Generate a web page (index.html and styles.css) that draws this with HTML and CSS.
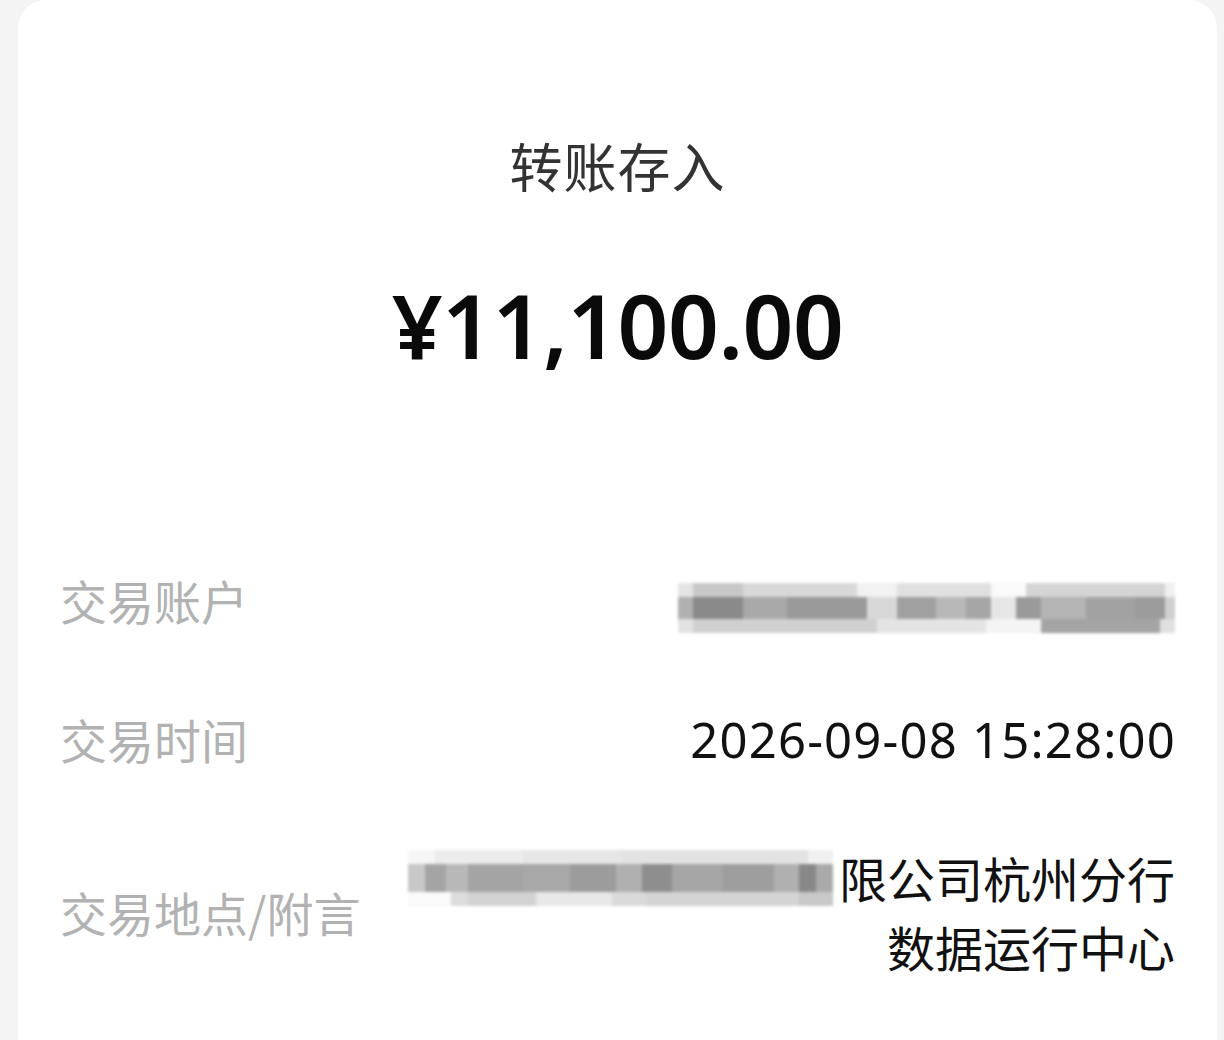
FILE: index.html
```html
<!DOCTYPE html>
<html lang="zh-CN">
<head>
<meta charset="utf-8">
<title>转账存入</title>
<link rel="stylesheet" href="styles.css">
</head>
<body>
<main class="card">
  <h1 class="title">转账存入</h1>
  <div class="amount">¥11,100.00</div>
  <dl class="details">
    <div class="row">
      <dt class="label">交易账户</dt>
      <dd class="value"><span class="mosaic mosaic-account" aria-label="已打码账户"></span></dd>
    </div>
    <div class="row">
      <dt class="label">交易时间</dt>
      <dd class="value value-time">2026-09-08 15:28:00</dd>
    </div>
    <div class="row">
      <dt class="label">交易地点/附言</dt>
      <dd class="value value-multi">
        <span class="line"><span class="mosaic mosaic-place" aria-label="已打码"></span>限公司杭州分行</span>
        <span class="line">数据运行中心</span>
      </dd>
    </div>
  </dl>
</main>
</body>
</html>
```

FILE: styles.css
```css
html, body {
  margin: 0;
  padding: 0;
  background: #f4f4f4;
}

body {
  font-family: "Noto Sans", "Noto Sans CJK SC", sans-serif;
  color: #111;
  height: 1040px;
  overflow: hidden;
}

.card {
  background: #fff;
  margin: 0 7px 0 18px;
  min-height: 1040px;
  border-radius: 28px 28px 0 0;
  padding: 135px 42px 0 42px;
  box-sizing: border-box;
}

.title {
  margin: 0;
  text-align: center;
  font-family: "Noto Sans CJK SC", sans-serif;
  font-weight: 400;
  font-size: 53px;
  line-height: 60px;
  color: #333;
  letter-spacing: 1px;
}

.amount {
  margin-top: 80px;
  text-align: center;
  font-family: "Noto Sans", "Noto Sans CJK SC", sans-serif;
  font-weight: 600;
  font-size: 89px;
  line-height: 100px;
  color: #0a0a0a;
  letter-spacing: -0.5px;
}

.details {
  margin: 190px 0 0 0;
  display: flex;
  flex-direction: column;
  gap: 69px;
}

.row {
  display: flex;
  justify-content: space-between;
  align-items: center;
}

.label {
  margin: 0;
  font-family: "Noto Sans CJK SC", sans-serif;
  font-size: 47px;
  line-height: 70px;
  color: #b2b2b2;
  white-space: nowrap;
}

.value {
  margin: 0;
  font-family: "Noto Sans CJK SC", sans-serif;
  font-size: 48px;
  line-height: 70px;
  color: #111;
  text-align: right;
}

.value-time {
  font-family: "Noto Sans", sans-serif;
  font-size: 49px;
  letter-spacing: 1.2px;
  margin-right: -1px;
}

.value-multi {
  display: flex;
  flex-direction: column;
  align-items: flex-end;
  line-height: 69px;
}

.line {
  display: inline-flex;
  align-items: center;
}

.mosaic {
  display: inline-block;
  filter: blur(1.5px);
  background-repeat: no-repeat;
}

.mosaic-account {
  width: 497px;
  height: 50px;
  vertical-align: middle;
  background-image:
    linear-gradient(to right,
      #e4e4e4 0 3%, #c8c8c8 3% 13%, #d8d8d8 13% 36%, #f2f2f2 36% 44%,
      #e0e0e0 44% 63%, #fafafa 63% 70%, #d4d4d4 70% 98%, #f0f0f0 98% 100%),
    linear-gradient(to right,
      #b0b0b0 0 3%, #8a8a8a 3% 13%, #a8a8a8 13% 22%, #9a9a9a 22% 38%,
      #d8d8d8 38% 44%, #a0a0a0 44% 52%, #b8b8b8 52% 58%, #a6a6a6 58% 63%,
      #e6e6e6 63% 68%, #9a9a9a 68% 73%, #b4b4b4 73% 82%, #a2a2a2 82% 92%,
      #9c9c9c 92% 98%, #d0d0d0 98% 100%),
    linear-gradient(to right,
      #e2e2e2 0 3%, #d0d0d0 3% 40%, #e4e4e4 40% 62%, #f4f4f4 62% 73%,
      #a4a4a4 73% 97%, #e0e0e0 97% 100%);
  background-size: 100% 14px, 100% 22px, 100% 14px;
  background-position: 0 0, 0 14px, 0 36px;
}

.mosaic-place {
  width: 425px;
  height: 56px;
  margin-right: 6px;
  background-image:
    linear-gradient(to right,
      #f6f6f6 0 6%, #ececec 6% 27%, #e6e6e6 27% 50%, #e2e2e2 50% 94%, #f0f0f0 94% 100%),
    linear-gradient(to right,
      #c8c8c8 0 4%, #a4a4a4 4% 9%, #b8b8b8 9% 14%, #a4a4a4 14% 27%,
      #a8a8a8 27% 38%, #9c9c9c 38% 49%, #b0b0b0 49% 55%, #8e8e8e 55% 62%,
      #a6a6a6 62% 74%, #9e9e9e 74% 86%, #b0b0b0 86% 92%, #888 92% 96%, #aaa 96% 100%),
    linear-gradient(to right,
      #fafafa 0 10%, #dcdcdc 10% 14%, #d2d2d2 14% 30%, #e8e8e8 30% 48%,
      #dadada 48% 56%, #d4d4d4 56% 92%, #c8c8c8 92% 100%);
  background-size: 100% 14px, 100% 28px, 100% 14px;
  background-position: 0 0, 0 14px, 0 42px;
}
```
